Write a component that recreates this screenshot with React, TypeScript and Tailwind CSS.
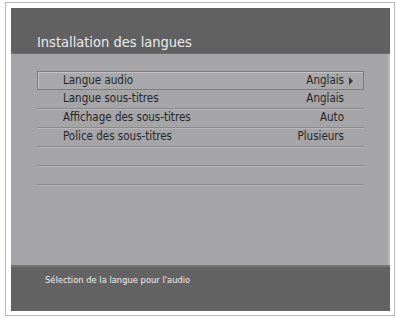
import React from "react";

const rows = [
  { label: "Langue audio", value: "Anglais", selected: true },
  { label: "Langue sous-titres", value: "Anglais" },
  { label: "Affichage des sous-titres", value: "Auto" },
  { label: "Police des sous-titres", value: "Plusieurs" },
  { label: "", value: "" },
  { label: "", value: "" },
];

export default function App() {
  return (
    <div className="w-[396px] h-[318px] bg-white overflow-hidden pt-[2px] pl-[5px]">
      <div className="w-[390px] h-[314px] border border-[#b8b8b8] pt-[5px] pl-[5px]">
        <div
          className="w-[379px] h-[303px] flex flex-col bg-[#a5a5a8]"
          style={{ fontFamily: '"DejaVu Sans Condensed", "Liberation Sans", sans-serif' }}
        >
          <div className="h-[46px] bg-[#616161] border-b border-[#6e6e6e] flex items-end pl-[26px] pb-[1px]">
            <span className="text-[14.5px] leading-[20px] text-[#ececec]">Installation des langues</span>
          </div>
          <div className="flex-1 pt-[17px] pl-[26px] border-r-2 border-[#b9b9bc]">
            <div className="w-[327px] flex flex-col">
              {rows.map((r, i) =>
                r.selected ? (
                  <div
                    key={i}
                    className="h-[19px] flex items-center border border-[#7c7c7e] shadow-[inset_1px_1px_0_#c2c2c4] bg-[#a8a8ab] text-[#262626] text-[11.5px]"
                  >
                    <span className="flex-1 pl-[25px]">{r.label}</span>
                    <span>{r.value}</span>
                    <span className="w-[19px] flex items-center pl-[5px]">
                      <svg width="4" height="8" viewBox="0 0 4 8">
                        <path d="M0 0 L4 4 L0 8 Z" fill="#3a3a3a" />
                      </svg>
                    </span>
                  </div>
                ) : (
                  <div
                    key={i}
                    className="h-[19px] flex items-center border-b border-[#8a8a8d] shadow-[0_1px_0_#b6b6b9] text-[#262626] text-[11.5px]"
                  >
                    <span className="flex-1 pl-[26px]">{r.label}</span>
                    <span className="pr-[20px]">{r.value}</span>
                  </div>
                )
              )}
            </div>
          </div>
          <div className="h-[46px] bg-[#636363] border-t-2 border-[#747474] pl-[34px] pt-[7px] text-[9.3px] leading-[12px] text-[#f0f0f0]">
            <div>Sélection de la langue pour l'audio</div>
          </div>
        </div>
      </div>
    </div>
  );
}
